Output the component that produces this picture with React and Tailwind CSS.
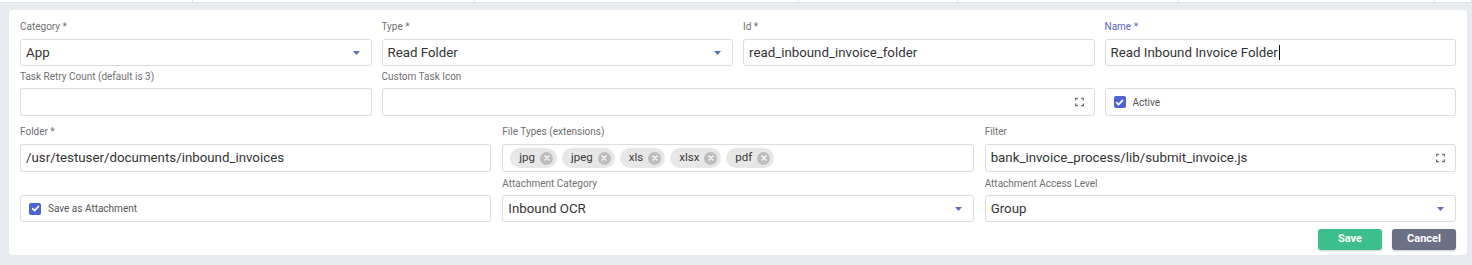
import React from 'react';

const font = { fontFamily: 'Roboto, "Liberation Sans", sans-serif' };

const Caret = () => (
  <svg width="7" height="4" viewBox="0 0 7 4" className="absolute right-[11px] top-1/2 -translate-y-1/2">
    <path d="M0 0h7L3.5 4z" fill="#5f6db8" />
  </svg>
);

const Expand = () => (
  <svg width="9" height="9" viewBox="0 0 9 9" className="absolute right-[10px] top-1/2 -translate-y-1/2" fill="none" stroke="#6f7480" strokeWidth="1.4">
    <path d="M0.7 3V0.7H3M6 0.7h2.3V3M8.3 6v2.3H6M3 8.3H0.7V6" />
  </svg>
);

const Check = () => (
  <span className="flex h-[12px] w-[12px] items-center justify-center rounded-[2px] bg-[#4f63d2]">
    <svg width="9" height="9" viewBox="0 0 9 9" fill="none" stroke="#fff" strokeWidth="1.6" strokeLinecap="round" strokeLinejoin="round">
      <path d="M1.6 4.7l2 1.9 3.9-4.2" />
    </svg>
  </span>
);

const Label = ({ children, active, mb = 'mb-[6px]' }) => (
  <div className={`h-[12px] text-[10px] leading-[12px] ${mb} ${active ? 'text-[#5a68c0]' : 'text-[#707070]'}`}>
    {children}
  </div>
);

const Box = ({ h = 'h-[27px]', children, className = '' }) => (
  <div className={`relative flex ${h} items-center rounded-[3px] border border-[#dcdcdc] bg-white px-[5px] text-[13.3px] text-[#333] ${className}`}>
    {children}
  </div>
);

const Chip = ({ text }) => (
  <span className="flex h-[20px] items-center gap-[5px] rounded-full bg-[#e7e7e7] pl-[9px] pr-[4px] text-[11.5px] text-[#3a3a3a]">
    {text}
    <span className="flex h-[13px] w-[13px] items-center justify-center rounded-full bg-[#bdbdbd]">
      <svg width="6" height="6" viewBox="0 0 6 6" stroke="#fff" strokeWidth="1.4" strokeLinecap="round">
        <path d="M1 1l4 4M5 1L1 5" />
      </svg>
    </span>
  </span>
);

export default function App() {
  const cols = [193, 282, 324, 159, 221, 256, 37];

  return (
    <div className="h-[265px] w-[1472px] overflow-hidden bg-[#e8ecf1]" style={font}>
      {/* table edge above */}
      <div className="flex h-[3px] border-b border-[#dfe4ea] bg-white">
        {cols.map((w, i) => (
          <div key={i} className="h-full border-r border-[#e3e3e3]" style={{ width: w }} />
        ))}
      </div>

      <div className="ml-[9px] mr-[5px] mt-[7px] h-[245px] rounded-[3px] bg-white px-[11px] pt-[11px] shadow-[0_0_1px_rgba(0,0,0,0.08)]">
        {/* row 1 */}
        <div className="grid grid-cols-4 gap-x-[10px]">
          <div>
            <Label>Category *</Label>
            <Box>App<Caret /></Box>
          </div>
          <div>
            <Label>Type *</Label>
            <Box>Read Folder<Caret /></Box>
          </div>
          <div>
            <Label>Id *</Label>
            <Box>read_inbound_invoice_folder</Box>
          </div>
          <div>
            <Label active>Name *</Label>
            <Box>
              Read Inbound Invoice Folder
              <span className="ml-[1px] h-[15px] w-px bg-[#111]" />
            </Box>
          </div>
        </div>

        {/* row 2 */}
        <div className="mt-[5px] grid grid-cols-4 gap-x-[10px]">
          <div>
            <Label mb="mb-[5px]">Task Retry Count (default is 3)</Label>
            <Box h="h-[28px]" />
          </div>
          <div className="col-span-2">
            <Label mb="mb-[5px]">Custom Task Icon</Label>
            <Box h="h-[28px]"><Expand /></Box>
          </div>
          <div>
            <Label mb="mb-[5px]" />
            <Box h="h-[28px]" className="gap-[7px] px-[8px]">
              <Check />
              <span className="text-[10px] text-[#555]">Active</span>
            </Box>
          </div>
        </div>

        {/* row 3 */}
        <div className="mt-[10px] grid grid-cols-3 gap-x-[11px]">
          <div>
            <Label>Folder *</Label>
            <Box h="h-[28px]">/usr/testuser/documents/inbound_invoices</Box>
          </div>
          <div>
            <Label>File Types (extensions)</Label>
            <Box h="h-[28px]" className="gap-[5px] px-[7px]">
              {['jpg', 'jpeg', 'xls', 'xlsx', 'pdf'].map((t) => (
                <Chip key={t} text={t} />
              ))}
            </Box>
          </div>
          <div>
            <Label>Filter</Label>
            <Box h="h-[28px]">bank_invoice_process/lib/submit_invoice.js<Expand /></Box>
          </div>
        </div>

        {/* row 4 */}
        <div className="mt-[6px] grid grid-cols-3 gap-x-[11px]">
          <div>
            <Label mb="mb-[5px]" />
            <Box className="gap-[7px] px-[8px]">
              <Check />
              <span className="text-[10px] text-[#555]">Save as Attachment</span>
            </Box>
          </div>
          <div>
            <Label mb="mb-[5px]">Attachment Category</Label>
            <Box>Inbound OCR<Caret /></Box>
          </div>
          <div>
            <Label mb="mb-[5px]">Attachment Access Level</Label>
            <Box>Group<Caret /></Box>
          </div>
        </div>

        {/* actions */}
        <div className="mt-[7px] flex justify-end gap-[10px]">
          <button className="h-[21px] w-[64px] rounded-[3px] bg-[#3cbf8c] text-[11px] font-bold text-white shadow-[0_1px_2px_rgba(0,0,0,0.2)]">
            Save
          </button>
          <button className="h-[21px] w-[64px] rounded-[3px] bg-[#6c7084] text-[11px] font-bold text-white shadow-[0_1px_2px_rgba(0,0,0,0.2)]">
            Cancel
          </button>
        </div>
      </div>
    </div>
  );
}
